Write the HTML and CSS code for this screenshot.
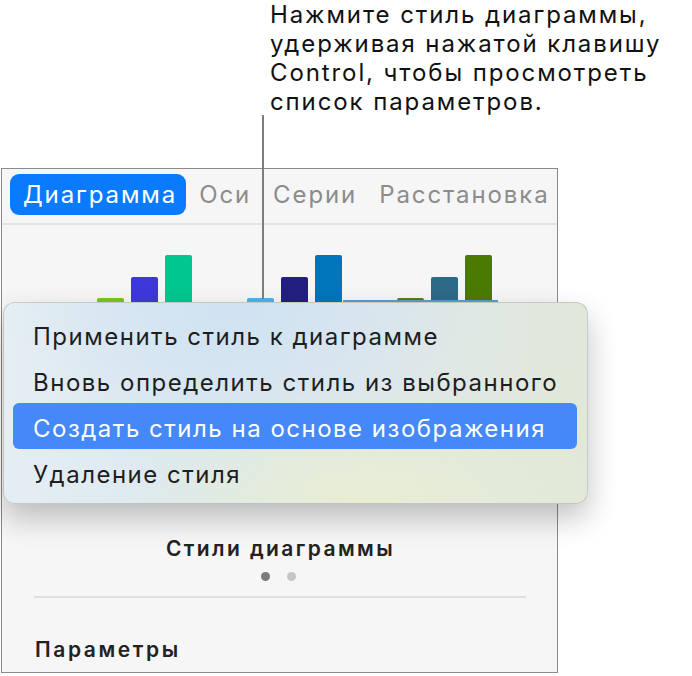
FILE: index.html
```html
<!DOCTYPE html>
<html lang="ru">
<head>
    <meta charset="UTF-8">
    <meta name="viewport" content="width=device-width, initial-scale=1.0">
    <title>Стили диаграммы</title>
    <link rel="stylesheet" href="styles.css">
</head>
<body>
    <div class="page">
        <p class="callout">Нажмите стиль диаграммы,<br>удерживая нажатой клавишу<br>Control, чтобы просмотреть<br>список параметров.</p>

        <div class="panel">
            <div class="tabs">
                <span class="tab active">Диаграмма</span>
                <span class="tab">Оси</span>
                <span class="sep"></span>
                <span class="tab">Серии</span>
                <span class="sep"></span>
                <span class="tab">Расстановка</span>
            </div>

            <div class="styles">
                <div class="chart-row">
                    <div class="group">
                        <div class="bar small" style="background:#7dc41b"></div>
                        <div class="bar mid" style="background:#3e38dc"></div>
                        <div class="bar tall" style="background:#00c78f"></div>
                    </div>
                    <div class="group">
                        <div class="bar small" style="background:#4cb3ea"></div>
                        <div class="bar mid" style="background:#231f80"></div>
                        <div class="bar tall" style="background:#0176bc"></div>
                    </div>
                    <div class="group">
                        <div class="bar small" style="background:#5a7a10"></div>
                        <div class="bar mid" style="background:#2d6a88"></div>
                        <div class="bar tall" style="background:#4b7a00"></div>
                    </div>
                </div>
            </div>

            <div class="styles-title">Стили диаграммы</div>
            <div class="dots">
                <span class="dot on"></span>
                <span class="dot"></span>
            </div>
            <hr class="divider">
            <div class="section-title">Параметры</div>
        </div>

        <div class="selected-line"></div>
        <div class="pointer"></div>

        <ul class="menu">
            <li>Применить стиль к диаграмме</li>
            <li>Вновь определить стиль из выбранного</li>
            <li class="hover">Создать стиль на основе изображения</li>
            <li>Удаление стиля</li>
        </ul>
    </div>
</body>
</html>
```

FILE: styles.css
```css
body {
    margin: 0;
    padding: 0;
    background-color: #ffffff;
    font-family: Inter, "Noto Sans", sans-serif;
    color: #1d1d1f;
}

.page {
    position: relative;
    width: 692px;
    height: 676px;
    overflow: hidden;
}

.callout {
    margin: 0;
    padding-left: 270px;
    font-size: 24px;
    line-height: 29px;
    letter-spacing: 1.9px;
    color: #111;
}

.panel {
    margin-top: 52px;
    margin-left: 1px;
    width: 555px;
    border: 1px solid #8a8a8a;
    background-color: #f6f6f6;
}

.tabs {
    display: flex;
    align-items: center;
    padding: 5px 8px 8px;
    border-bottom: 2px solid #e2e2e2;
}

.tab {
    font-size: 24px;
    line-height: 41px;
    letter-spacing: 1.9px;
    color: #8c8c8c;
    margin-right: 10px;
}

.tab.active {
    background-color: #0a7bff;
    color: white;
    border-radius: 9px;
    padding: 0 9px 0 13px;
    margin-right: 13px;
}

.sep {
    width: 1px;
    height: 27px;
    background-color: #dcdcdc;
    margin-right: 12px;
}

.styles {
    height: 300px;
    padding-top: 30px;
    box-sizing: border-box;
}

.chart-row {
    display: flex;
    gap: 55px;
    padding-left: 95px;
}

.group {
    display: flex;
    align-items: flex-end;
    gap: 7px;
    height: 80px;
}

.bar {
    width: 27px;
    border-radius: 2px 2px 0 0;
}

.bar.tall { height: 80px; }
.bar.mid { height: 58px; }
.bar.small { height: 37px; }

.styles-title {
    margin-top: 12px;
    padding-left: 2px;
    text-align: center;
    font-size: 21px;
    line-height: 24px;
    letter-spacing: 2.4px;
    font-weight: 600;
    color: #222;
}

.dots {
    display: flex;
    justify-content: center;
    gap: 17px;
    margin-top: 11px;
    padding-right: 2px;
}

.dot {
    width: 9px;
    height: 9px;
    border-radius: 50%;
    background-color: #c6c6c6;
}

.dot.on {
    background-color: #7b7b7b;
}

.divider {
    margin: 15px 31px 0 32px;
    border: none;
    border-top: 2px solid #e0e0e0;
}

.section-title {
    margin-top: 40px;
    padding-left: 33px;
    padding-bottom: 10px;
    font-size: 21px;
    line-height: 24px;
    letter-spacing: 2.6px;
    font-weight: 600;
    color: #222;
}

.pointer {
    position: absolute;
    left: 262px;
    top: 115px;
    width: 2px;
    height: 184px;
    background-color: #7d7d7d;
}

.selected-line {
    position: absolute;
    left: 343px;
    top: 300px;
    width: 155px;
    height: 2px;
    background-color: #5d9bd0;
}

.menu {
    position: absolute;
    left: 3px;
    top: 302px;
    width: 585px;
    height: 202px;
    margin: 0;
    padding: 8px 10px 0 9px;
    box-sizing: border-box;
    list-style: none;
    border: 1px solid rgba(0, 0, 0, 0.14);
    border-radius: 12px;
    background:
        radial-gradient(ellipse 45% 60% at 62% 100%, rgba(233, 238, 208, 0.95), rgba(233, 238, 208, 0) 100%),
        radial-gradient(ellipse 40% 70% at 40% 0%, rgba(206, 225, 242, 0.9), rgba(206, 225, 242, 0) 100%),
        linear-gradient(95deg, #e5eef3 0%, #dbe8f1 35%, #dfe8eb 65%, #e1e8d8 100%);
    box-shadow: 0 14px 30px rgba(0, 0, 0, 0.24);
}

.menu li {
    height: 46px;
    padding: 4px 0 0 20px;
    box-sizing: border-box;
    line-height: 44px;
    font-size: 24px;
    letter-spacing: 1.5px;
    color: #1e1e1e;
    border-radius: 6px;
}

.menu li.hover {
    background-color: #4489f7;
    color: white;
}
```
